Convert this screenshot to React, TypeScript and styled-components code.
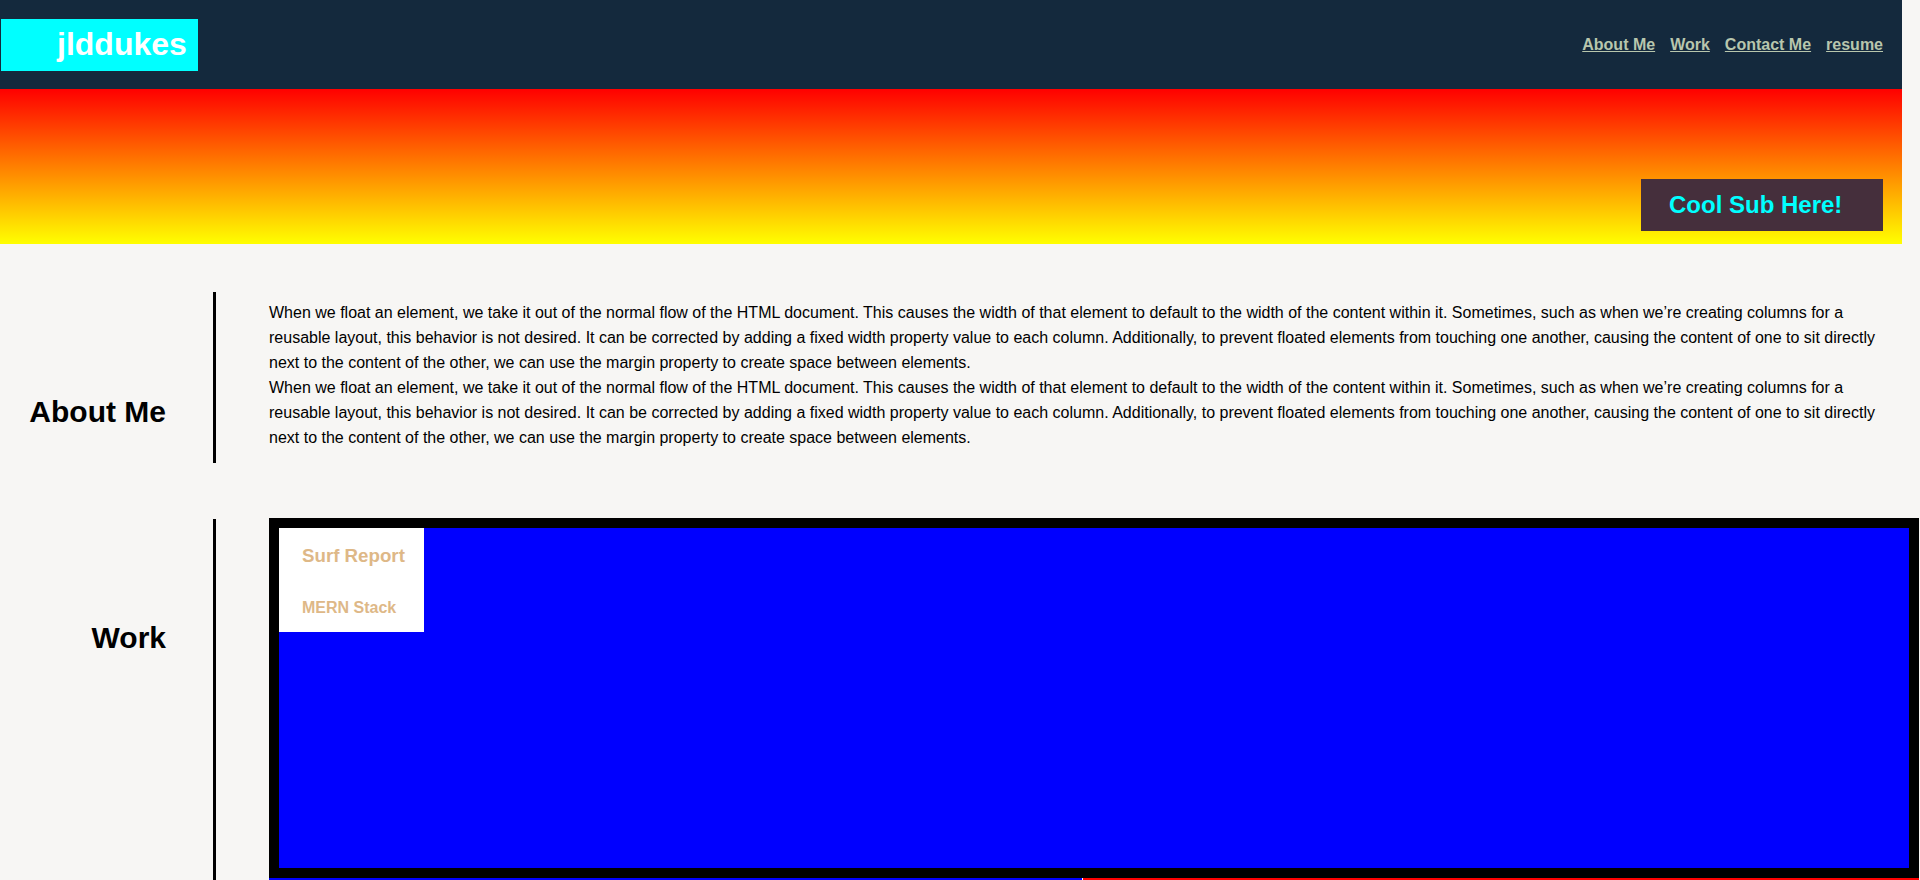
import React from "react";
import styled, { createGlobalStyle } from "styled-components";

const GlobalStyle = createGlobalStyle`
  html, body {
    margin: 0;
    padding: 0;
    background: #f7f6f4;
    overflow: hidden;
  }
  body {
    font-family: "Liberation Sans", Arial, Helvetica, sans-serif;
    color: #000;
  }
`;

const Header = styled.header`
  width: 1902px;
  height: 89px;
  background: #14293d;
  display: flex;
  align-items: center;
  justify-content: space-between;
  padding: 0 19px 0 1px;
  box-sizing: border-box;
`;

const Logo = styled.div`
  width: 197px;
  height: 52px;
  background: #00ffff;
  color: #ffffff;
  font-size: 32px;
  font-weight: bold;
  line-height: 37px;
  display: flex;
  align-items: center;
  padding-left: 56px;
  box-sizing: border-box;
`;

const Nav = styled.nav`
  display: flex;
  gap: 15px;
`;

const NavLink = styled.a`
  color: #b8c6ad;
  font-size: 16px;
  font-weight: bold;
  text-decoration: underline;
`;

const Hero = styled.div`
  width: 1902px;
  height: 155px;
  background: linear-gradient(#ff0000, #ffff00);
  display: flex;
  justify-content: flex-end;
  align-items: flex-end;
  padding: 0 19px 13px 0;
  box-sizing: border-box;
`;

const Sub = styled.div`
  width: 242px;
  height: 52px;
  background: #452f3c;
  color: #00ffff;
  font-size: 24px;
  font-weight: bold;
  display: flex;
  align-items: center;
  padding-left: 28px;
  box-sizing: border-box;
`;

const Main = styled.main`
  display: flex;
  flex-direction: column;
  gap: 55px;
  padding-top: 48px;
`;

const Row = styled.section`
  display: flex;
  align-items: stretch;
`;

const HeadingCol = styled.div`
  width: 166px;
  flex: none;
`;

const Heading = styled.h2`
  margin: 102px 0 0;
  font-size: 30px;
  line-height: 35px;
  font-weight: bold;
  text-align: right;
`;

const Divider = styled.div<{ $offset?: number }>`
  width: 3px;
  flex: none;
  margin-left: 47px;
  margin-top: ${(p) => p.$offset ?? 0}px;
  background: #000;
`;

const Content = styled.div<{ $pad?: string }>`
  width: 1630px;
  flex: none;
  margin-left: 53px;
  padding: ${(p) => p.$pad ?? "0"};
`;

const Para = styled.p`
  margin: 0;
  font-size: 16px;
  line-height: 25px;
`;

const Feature = styled.div`
  width: 1630px;
  height: 340px;
  border: 10px solid #000;
  background: #0000ff;
  display: flex;
  align-items: flex-start;
`;

const Card = styled.div`
  width: 145px;
  box-sizing: border-box;
  background: #ffffff;
  padding: 17px 19px 15px 23px;
`;

const CardTitle = styled.h3`
  margin: 0 0 32px;
  font-size: 18.72px;
  line-height: 22px;
  font-weight: bold;
  color: #deb887;
  white-space: nowrap;
`;

const CardStack = styled.h4`
  margin: 0;
  font-size: 16px;
  line-height: 18px;
  font-weight: bold;
  color: #deb887;
  white-space: nowrap;
`;

const Tiles = styled.div`
  display: flex;
  width: 1650px;
  gap: 1px;
  background: #ffffff;
`;

const Tile = styled.div<{ $color: string; $width?: number }>`
  height: 200px;
  background: ${(p) => p.$color};
  ${(p) => (p.$width ? `width: ${p.$width}px; flex: none;` : "flex: 1;")}
`;

const TEXT =
  "When we float an element, we take it out of the normal flow of the HTML document. This causes the width of that element to default to the width of the content within it. Sometimes, such as when we\u2019re creating columns for a reusable layout, this behavior is not desired. It can be corrected by adding a fixed width property value to each column. Additionally, to prevent floated elements from touching one another, causing the content of one to sit directly next to the content of the other, we can use the margin property to create space between elements.";

export default function App() {
  return (
    <>
      <GlobalStyle />
      <Header>
        <Logo>jlddukes</Logo>
        <Nav>
          <NavLink href="#">About Me</NavLink>
          <NavLink href="#">Work</NavLink>
          <NavLink href="#">Contact Me</NavLink>
          <NavLink href="#">resume</NavLink>
        </Nav>
      </Header>
      <Hero>
        <Sub>Cool Sub Here!</Sub>
      </Hero>
      <Main>
        <Row>
          <HeadingCol>
            <Heading>About Me</Heading>
          </HeadingCol>
          <Divider />
          <Content $pad="8px 0 13px">
            <Para>{TEXT}</Para>
            <Para>{TEXT}</Para>
          </Content>
        </Row>
        <Row>
          <HeadingCol>
            <Heading>Work</Heading>
          </HeadingCol>
          <Divider $offset={1} />
          <Content>
            <Feature>
              <Card>
                <CardTitle>Surf Report</CardTitle>
                <CardStack>MERN Stack</CardStack>
              </Card>
            </Feature>
            <Tiles>
              <Tile $color="#0000ff" $width={813} />
              <Tile $color="#ff0000" />
            </Tiles>
          </Content>
        </Row>
      </Main>
    </>
  );
}
